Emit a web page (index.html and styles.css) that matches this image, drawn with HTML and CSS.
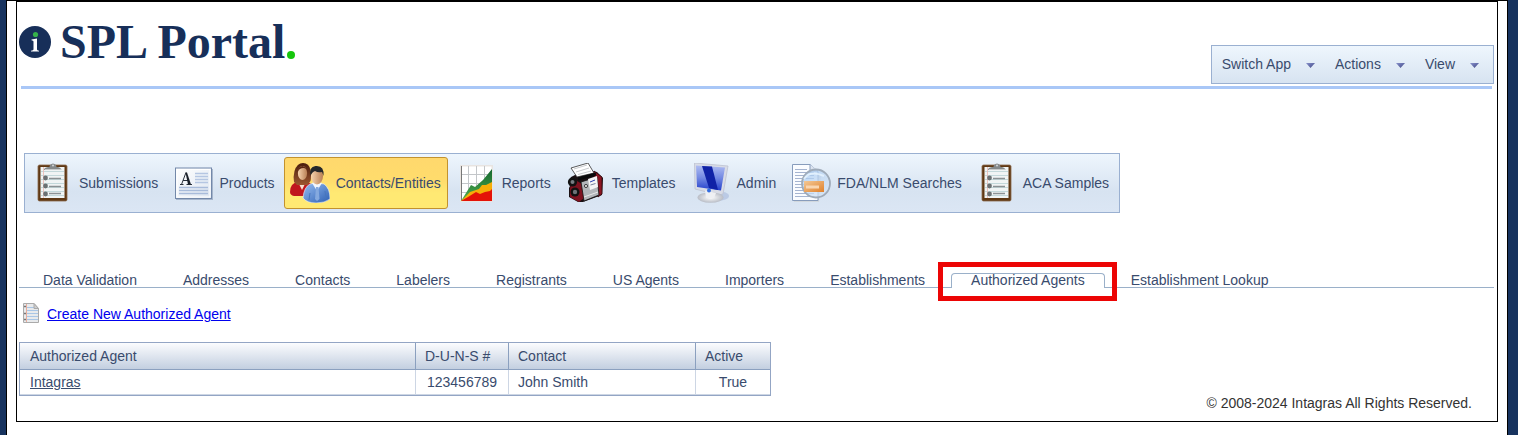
FILE: index.html
```html
<!DOCTYPE html>
<html lang="en">
<head>
<meta charset="utf-8">
<title>SPL Portal</title>
<link rel="stylesheet" href="styles.css">
</head>
<body>
<svg class="defs" width="0" height="0" aria-hidden="true">
  <defs>
    <linearGradient id="paper" x1="0" y1="0" x2="1" y2="1"><stop offset="0" stop-color="#fff"/><stop offset="1" stop-color="#dde5f0"/></linearGradient>
    <linearGradient id="green" x1="0" y1="0" x2="0" y2="1"><stop offset="0" stop-color="#14662f"/><stop offset="1" stop-color="#4fae4d"/></linearGradient>
    <linearGradient id="screen" x1="0" y1="0" x2="0" y2="1"><stop offset="0" stop-color="#aebcf2"/><stop offset=".5" stop-color="#7288e2"/><stop offset="1" stop-color="#2440cc"/></linearGradient>
    <radialGradient id="base"><stop offset="0" stop-color="#fff"/><stop offset="1" stop-color="#b9bdc6"/></radialGradient>
    <linearGradient id="suit" x1="0" y1="0" x2="1" y2="1"><stop offset="0" stop-color="#98bdf0"/><stop offset="1" stop-color="#2c5fb4"/></linearGradient>
    <linearGradient id="skin" x1="0" y1="0" x2="1" y2="0"><stop offset="0" stop-color="#f6d3ae"/><stop offset="1" stop-color="#b97f55"/></linearGradient>
    <linearGradient id="hair" x1="0" y1="0" x2="0" y2="1"><stop offset="0" stop-color="#4a1c0c"/><stop offset="1" stop-color="#9c5630"/></linearGradient>
    <linearGradient id="amber" x1="0" y1="0" x2="1" y2="1"><stop offset="0" stop-color="#f3c896"/><stop offset="1" stop-color="#e0812b"/></linearGradient>
    <linearGradient id="lens" x1="0" y1="0" x2="1" y2="1"><stop offset="0" stop-color="#9fc6f2"/><stop offset="1" stop-color="#dfe9f4"/></linearGradient>
    <linearGradient id="arrow" x1="0" y1="0" x2="1" y2="1"><stop offset="0" stop-color="#8a93cc"/><stop offset="1" stop-color="#3c4484"/></linearGradient>
    <symbol id="clipboard" viewBox="0 0 40 40">
      <rect x="5" y="2" width="29" height="36" rx="1.5" fill="#5f3814" stroke="#8b6a4c" stroke-width=".8"/>
      <rect x="7.500" y="4" width="24" height="31" fill="#f0f4f4"/>
      <path d="M8 8.500h23M8 12.500h23M8 16.500h23M8 20.500h23M8 24.500h23M8 28.500h23M8 32.500h23" stroke="#c3d8da" stroke-width="1"/>
      <path d="M10.500 4v31" stroke="#eab9b2" stroke-width=".8"/>
      <path d="M11 7q0-2.500 4-3h1.500q0-3 3.500-3.500 3.500.5 3.500 3.500H25q3 .5 3.500 3z" fill="#84898b"/>
      <path d="M12 6.500h16" stroke="#c6c9ca"/>
      <circle cx="20" cy="2.500" r="1" fill="#d5d7d8"/>
      <g fill="#6b7173"><circle cx="12.500" cy="15" r="2.400"/><circle cx="12.500" cy="23" r="2.400"/><circle cx="12.500" cy="31" r="2.400"/></g>
      <path d="M16 15.500h12M16 23.500h12M16 30.500h12" stroke="#8b9193" stroke-width="1.600"/>
    </symbol>
  </defs>
</svg>

<div class="page">
  <div class="frame">
    <header class="header">
      <a class="logo" href="#">
        <svg class="logo-mark" viewBox="0 0 32 32" aria-hidden="true">
          <circle cx="16" cy="16" r="16" fill="#172f59"/>
          <circle cx="16.500" cy="8.500" r="2.600" fill="#36b24a"/>
          <path d="M12.500 13.500l5.500-1v11q0 1 2 1.200v.8h-8v-.8q2.500-.2 2.500-1.200v-8q0-1-2-1.200z" fill="#fff"/>
        </svg>
        <span class="logo-text">SPL Portal</span><span class="logo-dot"></span>
      </a>
      <nav class="app-menu" aria-label="Application">
        <button type="button">Switch App<svg viewBox="0 0 9 5"><path d="M0 0h9L4.500 5z" fill="url(#arrow)"/></svg></button>
        <button type="button">Actions<svg viewBox="0 0 9 5"><path d="M0 0h9L4.500 5z" fill="url(#arrow)"/></svg></button>
        <button type="button">View<svg viewBox="0 0 9 5"><path d="M0 0h9L4.500 5z" fill="url(#arrow)"/></svg></button>
      </nav>
    </header>

    <nav class="toolbar" aria-label="Main">
      <a href="#"><svg viewBox="0 0 40 40"><use href="#clipboard"/></svg>Submissions</a>
      <a href="#"><svg viewBox="0 0 40 40">
        <rect x="3" y="6" width="37" height="31" fill="#8396b2" opacity=".6"/>
        <rect x="2.500" y="5" width="36" height="30.500" fill="url(#paper)" stroke="#7388a9"/>
        <rect x="4" y="6.500" width="33" height="27.500" fill="none" stroke="#fff"/>
        <path d="M22 10.500h13M22 13.500h13M22 16.500h13M22 19.500h13" stroke="#b5c6e2" stroke-width="1.500"/>
        <path d="M6 24.500h29M6 27.500h29M6 30.500h29" stroke="#a8bbda" stroke-width="1.300"/>
        <path d="M7 21.500h3.500M13.500 21.500H19M8.500 21.500L13 9.500M10 17.500h5" stroke="#29303b" stroke-width="1" fill="none"/>
        <path d="M12.500 9.500h1.500l4 12h-3z" fill="#1b2029"/>
      </svg>Products</a>
      <a href="#" class="selected" aria-current="page"><svg viewBox="0 0 40 40">
        <path d="M0 29q0-9 8-10h9q7 2 7 9l-5 5H4q-4-1-4-4z" fill="#c0161e"/>
        <path d="M8 19l4 8 4-8z" fill="#f7dfd0"/>
        <path d="M4 19Q3 14 4.500 8 7 0 13 0q6 0 7.500 7 1 7 0 11l-3 4H7z" fill="url(#hair)"/>
        <ellipse cx="12.500" cy="10" rx="4.600" ry="7" fill="url(#skin)"/>
        <path d="M7.500 9q1-6 5-6 4 1 5 6-1-4-4-4-4 0-6 4z" fill="#5b2613"/>
        <path d="M13 35q1-11 7-14l6-1 8 1q6 4 6 15-5 4-14 4-9 0-13-5z" fill="url(#suit)" stroke="#eff4fb" stroke-width=".6"/>
        <path d="M22 20l5 8 5-8-5-2z" fill="#f2f6fc"/><path d="M26 24h2.500l1 12-2.500 2-2-2z" fill="#85a9df"/>
        <path d="M20 30l-1 7M35 28l1 8" stroke="#4876bd" fill="none"/>
        <ellipse cx="27" cy="13" rx="6" ry="8.500" fill="url(#skin)"/>
        <path d="M20.500 13q-2-9 5-10 9-1 8 10l-1.500-4q-4 1-7-1-3 1-4.500 5z" fill="#26282b"/>
      </svg>Contacts/Entities</a>
      <a href="#"><svg viewBox="0 0 40 40">
        <rect x="4" y="2" width="33" height="37" fill="#e8e4e1"/>
        <rect x="5.500" y="3.500" width="30" height="34" fill="#fff"/>
        <path d="M12.500 3v34M20.500 3v34M28.500 3v34M5 11.500h31M5 20.500h31M5 29.500h31" stroke="#c3c6c9"/>
        <path d="M5.500 3v34.500" stroke="#777"/>
        <path d="M5 38l10-16 4 2 8-7L36 6v32z" fill="url(#green)"/>
        <path d="M5 38l9-9 6-2 3-1 3-4h4l6-3v19z" fill="#f6ad08"/>
        <path d="M5 38l7-4 8-5 4 2 5-2 5-1 2-2v12z" fill="#e41208"/>
      </svg>Reports</a>
      <a href="#"><svg viewBox="0 0 40 40">
        <path d="M5 14l6-3 15-3 5 1 6 6-1 17-19 7h-5l-9-5v-9l2-4-2-3z" fill="#1a1013"/>
        <path d="M6 15l10 6 2 14-5 4-9-5v-8z" fill="#7e1220"/>
        <path d="M28 8l8 6v17l-4 3-2-18-3-4z" fill="#8c1522" stroke="#2a0a0e" stroke-width=".8"/>
        <path d="M5 5L22 0l6 10-17 4z" fill="#fff" stroke="#333" stroke-width=".8"/>
        <path d="M8 6l13-4M10 9l13-4M12 11.500l13-3.500" stroke="#b9bdc0" stroke-width=".8"/>
        <path d="M12 16l18-5" stroke="#0a0a0a" stroke-width="3"/>
        <path d="M15 19l16-5 2 18-15 6z" fill="#b3b6ba" stroke="#111" stroke-width=".8"/>
        <path d="M22 16l9-3 1 11-8 3z" fill="#f5f5f5"/>
        <path d="M24 19l5-2" stroke="#2a3fae"/><path d="M24.500 22l5-1.500" stroke="#77829c"/>
        <path d="M18 34l14-5" stroke="#e8e8e8"/>
        <circle cx="6.500" cy="19" r="4.600" fill="#111"/><circle cx="6.500" cy="19" r="2" fill="#777d83"/>
        <circle cx="9" cy="29" r="4.500" fill="#111"/><circle cx="9" cy="29" r="2.200" fill="#6d7176"/>
        <circle cx="20" cy="23" r="1.600" fill="#ddd" stroke="#222" stroke-width=".8"/>
      </svg>Templates</a>
      <a href="#"><svg viewBox="0 0 40 40">
        <ellipse cx="26" cy="33" rx="12" ry="5" fill="#a9b9dc" opacity=".6"/>
        <path d="M3.500 0L37 3l-5 28-4 1L4 26z" fill="#d9dce6" stroke="#bcc1d0" stroke-width=".8"/>
        <path d="M5 2.500l29 2-4 23L6 24z" fill="url(#screen)"/>
        <path d="M11 3l10 .5 6 23.500-9-2z" fill="#1022a6"/>
        <ellipse cx="19.500" cy="34.500" rx="13" ry="5.200" fill="url(#base)"/>
        <path d="M14 27.500l11 2.500-2 5h-8z" fill="#eff0f3"/>
        <circle cx="18" cy="27.500" r="2" fill="#326ce0"/>
      </svg>Admin</a>
      <a href="#"><svg viewBox="0 0 40 40">
        <path d="M3 3l17 1 10 9-2 26H3z" fill="#c9c5bf" opacity=".4"/>
        <path d="M1.500 1.500H19l8 7v29H1.500z" fill="#fafcff" stroke="#879cbc"/>
        <path d="M19 1.500V8h8" fill="#dce4ef" stroke="#879cbc"/>
        <path d="M4 6.500h12M4 9.500h19M4 12.500h19M4 15.500h19M4 18.500h19M4 21.500h19M4 24.500h19M4 27.500h19M4 30.500h19M4 33.500h19" stroke="#a5b4d0"/>
        <circle cx="25" cy="20.500" r="14" fill="url(#lens)" fill-opacity=".72" stroke="#9fabb9" stroke-width="1.800"/>
        <path d="M13 16q6-9 20-3" stroke="#e9f5ff" stroke-width="2" fill="none" opacity=".8"/>
        <rect x="13" y="18" width="20" height="11" fill="url(#amber)"/>
        <rect x="15" y="22.500" width="13" height="3" fill="#f9d6b1"/>
      </svg>FDA/NLM Searches</a>
      <a href="#"><svg viewBox="0 0 40 40"><use href="#clipboard"/></svg>ACA Samples</a>
    </nav>

    <nav class="tabs" aria-label="Contacts and entities">
      <a href="#">Data Validation</a>
      <a href="#">Addresses</a>
      <a href="#">Contacts</a>
      <a href="#">Labelers</a>
      <a href="#">Registrants</a>
      <a href="#">US Agents</a>
      <a href="#">Importers</a>
      <a href="#">Establishments</a>
      <a href="#" class="active" aria-current="page">Authorized Agents</a>
      <a href="#">Establishment Lookup</a>
    </nav>

    <div class="create">
      <svg viewBox="0 0 16 20" aria-hidden="true">
        <path d="M.5.500H11l4.500 5v14H.5z" fill="#e8eaec" stroke="#aaa"/>
        <path d="M3 4.500h8M3 7.500h12M3 10.500h12M3 13.500h12M3 16.500h12" stroke="#a9c6e6"/>
        <path d="M3.500 1v18" stroke="#e7ad9d"/><path d="M11 .5v5h4.500z" fill="#cdcdcd" stroke="#aaa"/>
        <path d="M1 3.500h2M1 10.500h2M1 16.500h2" stroke="#777" stroke-width="1.500"/>
      </svg>
      <a href="#">Create New Authorized Agent</a>
    </div>

    <table class="grid">
      <colgroup><col class="col-agent"><col class="col-duns"><col class="col-contact"><col class="col-active"></colgroup>
      <thead>
        <tr><th scope="col">Authorized Agent</th><th scope="col">D-U-N-S #</th><th scope="col">Contact</th><th scope="col">Active</th></tr>
      </thead>
      <tbody>
        <tr><td><a href="#">Intagras</a></td><td class="center">123456789</td><td>John Smith</td><td class="center">True</td></tr>
      </tbody>
    </table>

    <footer class="footer">© 2008-2024 Intagras All Rights Reserved.</footer>
  </div>
</div>
</body>
</html>
```
FILE: styles.css
```css
* { box-sizing: border-box; }

body {
  margin: 0;
  padding: 0 10px 0 6px;
  background: #17335f;
  color: #394b6d;
  font: 14px/16px "Liberation Sans", Arial, sans-serif;
}

a { color: inherit; }

.defs { position: absolute; }

.page {
  min-height: 100vh;
  padding: 0 9px;
  background: #fff;
  border: 1px solid #000;
  border-bottom: 0;
}

.frame {
  padding: 0 3px 10px 2px;
  border: 1px solid #000;
}

.header {
  display: flex;
  justify-content: space-between;
  align-items: flex-end;
  height: 87px;
  margin: 0 2px;
  border-bottom: 3px solid #a9c7f7;
}

.logo {
  display: flex;
  align-items: center;
  align-self: flex-start;
  margin: 14px 0 0 -2px;
  color: #172f59;
  text-decoration: none;
}

.logo-mark { width: 32px; height: 32px; margin-right: 9px; }

.logo-text { font: bold 48px/52px "Liberation Serif", serif; }

.logo-dot {
  width: 8px;
  height: 8px;
  margin: 26px 0 0 2px;
  border-radius: 50%;
  background: #16c60c;
}

.app-menu {
  display: flex;
  gap: 20px;
  height: 39px;
  margin: 0 -2px 2px 0;
  padding: 0 14px 1px 10px;
  border: 1px solid #9ab0d1;
  background: linear-gradient(#eef6fd, #d7e3f1);
}

.app-menu button {
  display: flex;
  align-items: center;
  gap: 15px;
  padding: 0;
  border: 0;
  background: none;
  color: inherit;
  font: inherit;
}

.app-menu svg { width: 9px; height: 5px; margin-top: 3px; }

.toolbar {
  display: flex;
  gap: 2px;
  width: max-content;
  margin: 64px 0 0 5px;
  padding: 3px 3px 3px 2px;
  border: 1px solid #9ab0d1;
  background: linear-gradient(#eef6fd, #d7e3f1 65%, #dbe6f4);
}

.toolbar a {
  display: flex;
  align-items: center;
  gap: 6px;
  height: 52px;
  padding: 0 6px 1px 5px;
  border: 1px solid transparent;
  border-radius: 3px;
  text-decoration: none;
}

.toolbar svg { width: 40px; height: 40px; }

.toolbar .selected {
  border-color: #c2922f;
  background: linear-gradient(#ffd86d, #ffdc6c 45%, #ffe973 70%, #ffe973);
}

.tabs {
  display: flex;
  gap: 6px;
  margin-top: 60px;
  padding-left: 4px;
  box-shadow: inset 0 -1px #9ab0c9;
}

.tabs a {
  position: relative;
  height: 15px;
  padding: 0 19px;
  border: 1px solid transparent;
  border-bottom: 0;
  line-height: 12px;
  text-decoration: none;
}

.tabs .active {
  border-color: #9ab0c9;
  border-radius: 4px 4px 0 0;
  background: #fff;
}

/* Highlight box over the current tab */
.tabs .active::after {
  content: "";
  position: absolute;
  inset: -12px -13px -13px -14px;
  border: 5px solid #ec0505;
}

.create {
  display: flex;
  align-items: center;
  gap: 8px;
  margin: 15px 0 0 4px;
}

.create svg { width: 16px; height: 20px; }

.create a { padding-top: 2px; color: #00e; }

.grid {
  table-layout: fixed;
  width: 752px;
  max-width: 100%;
  margin-top: 19px;
  border: 1px solid #93a5c4;
  border-spacing: 0;
}

.col-agent { width: 396px; }
.col-duns { width: 93px; }
.col-contact { width: 187px; }

.grid th,
.grid td {
  padding: 0 9px;
  text-align: left;
  font-weight: normal;
}

.grid th {
  height: 27px;
  border-right: 1px solid #8ba0bf;
  border-bottom: 1px solid #8ba0bf;
  background: linear-gradient(#fbfcfe, #c3cfe0);
}

.grid td {
  height: 25px;
  border-right: 1px solid #cdd6e4;
  border-bottom: 1px solid #cdd6e4;
}

.grid th:first-child,
.grid td:first-child { padding-left: 10px; }

.grid th:last-child,
.grid td:last-child { border-right: 0; }

.grid .center { text-align: center; }

.footer {
  margin: -1px 22px 0 0;
  color: #333;
  text-align: right;
}
```
